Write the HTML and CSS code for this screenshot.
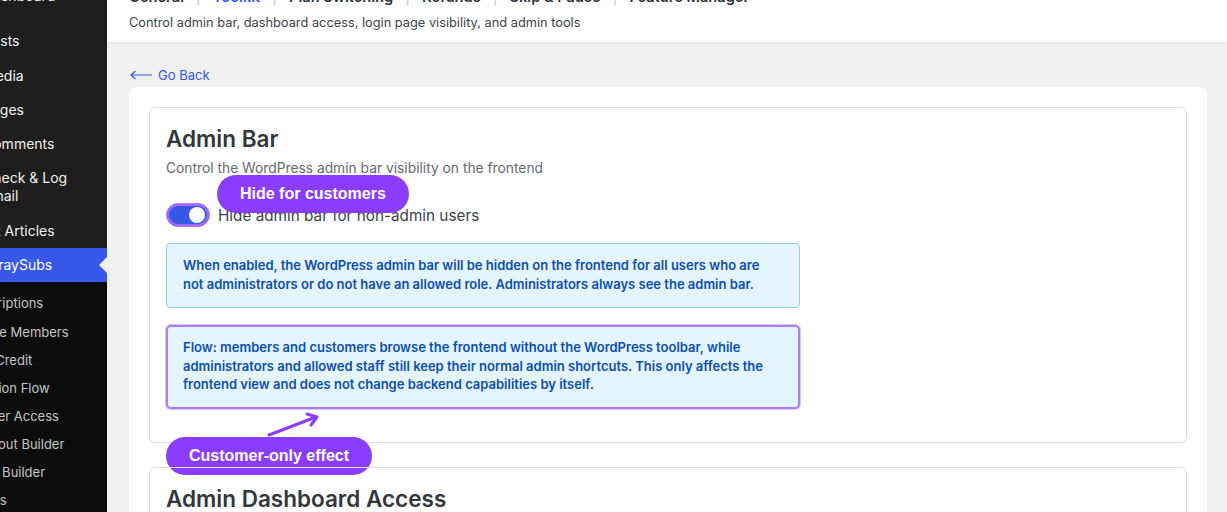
FILE: index.html
```html
<!DOCTYPE html>
<html lang="en">
<head>
    <meta charset="UTF-8">
    <meta name="viewport" content="width=device-width, initial-scale=1.0">
    <title>ArraySubs Toolkit</title>
    <link rel="stylesheet" href="styles.css">
</head>
<body>
    <div class="layout">
        <!-- Admin menu -->
        <nav class="sidebar">
            <ul class="menu">
                <li class="menu-item">Dashboard</li>
                <li class="menu-sep"></li>
                <li class="menu-item">Posts</li>
                <li class="menu-item">Media</li>
                <li class="menu-item">Pages</li>
                <li class="menu-item">Comments</li>
                <li class="menu-item">Check &amp; Log<br>Email</li>
                <li class="menu-item">Kit Articles</li>
                <li class="menu-item active">ArraySubs</li>
            </ul>
            <ul class="submenu">
                <li>Subscriptions</li>
                <li>Inactive Members</li>
                <li>Store Credit</li>
                <li>Retention Flow</li>
                <li>Member Access</li>
                <li>Checkout Builder</li>
                <li>Profile Builder</li>
                <li>Reports</li>
            </ul>
        </nav>

        <main class="main">
            <header class="page-header">
                <div class="tabs">
                    <span class="tab">General</span><span class="sep">|</span>
                    <span class="tab current">Toolkit</span><span class="sep">|</span>
                    <span class="tab">Plan Switching</span><span class="sep">|</span>
                    <span class="tab">Refunds</span><span class="sep">|</span>
                    <span class="tab">Skip &amp; Pause</span><span class="sep">|</span>
                    <span class="tab">Feature Manager</span>
                </div>
                <p class="page-desc">Control admin bar, dashboard access, login page visibility, and admin tools</p>
            </header>

            <div class="content">
                <a class="go-back" href="#">
                    <svg width="22" height="10" viewBox="0 0 22 10">
                        <path d="M1 5 H22 M5.5 1 L1 5 L5.5 9" stroke="#3858e9" stroke-width="1.2" fill="none"/>
                    </svg>
                    Go Back
                </a>

                <div class="card">
                    <section class="section">
                        <h2>Admin Bar</h2>
                        <p class="section-desc">Control the WordPress admin bar visibility on the frontend</p>

                        <label class="toggle-row">
                            <span class="toggle"><span class="knob"></span></span>
                            <span class="toggle-label">Hide admin bar for non-admin users</span>
                        </label>

                        <div class="notice">
                            When enabled, the WordPress admin bar will be hidden on the frontend for all users who are not administrators or do not have an allowed role. Administrators always see the admin bar.
                        </div>

                        <div class="notice flow">
                            Flow: members and customers browse the frontend without the WordPress toolbar, while administrators and allowed staff still keep their normal admin shortcuts. This only affects the frontend view and does not change backend capabilities by itself.
                        </div>

                        <!-- annotations -->
                        <span class="pill pill-top">Hide for customers</span>
                        <svg class="note-arrow" width="60" height="30" viewBox="0 0 60 30">
                            <path d="M5 25 L52 7" stroke="#8b3dff" stroke-width="3" stroke-linecap="round" fill="none"/>
                            <path d="M43 4 L53 7 L47 15" stroke="#8b3dff" stroke-width="3" stroke-linecap="round" stroke-linejoin="round" fill="none"/>
                        </svg>
                        <span class="pill pill-bottom">Customer-only effect</span>
                    </section>

                    <section class="section">
                        <h2>Admin Dashboard Access</h2>
                        <p class="section-desc">Restrict access to the WordPress dashboard for non-admin users</p>
                    </section>
                </div>
            </div>
        </main>
    </div>
</body>
</html>
```

FILE: styles.css
```css
* {
    box-sizing: border-box;
}
body {
    margin: 0;
    background-color: #f0f0f0;
    font-family: Inter, "Noto Sans", sans-serif;
    overflow: hidden;
}
.layout {
    display: flex;
    height: 512px;
}

/* sidebar */
.sidebar {
    width: 107px;
    flex-shrink: 0;
    background-color: #0c0c0c;
    overflow: hidden;
}
.menu, .submenu {
    list-style: none;
    margin: 0;
    padding: 0;
    width: 160px;
    margin-left: -53px;
}
.menu {
    background-color: #1e1e1e;
    margin-top: -21px;
}
.menu-item {
    position: relative;
    padding: 8px 8px 8.3px 36px;
    font-size: 14px;
    line-height: 18px;
    color: #f0f0f0;
}
.menu-sep {
    height: 11px;
}
.menu-item.active {
    background-color: #3858e9;
    color: #fff;
}
.menu-item.active::after {
    content: "";
    position: absolute;
    right: 0;
    top: 9px;
    border: 8px solid transparent;
    border-right-color: #f0f0f0;
}
.submenu {
    padding: 7px 0 8px;
}
.submenu li {
    padding: 5px 12px 5.15px;
    font-size: 13px;
    line-height: 18px;
    color: #c3c4c7;
}

/* main */
.main {
    flex: 1;
    min-width: 0;
}
.page-header {
    background-color: #fff;
    margin-top: -14px;
    padding: 0 22px 10px;
    box-shadow: 0 1px 3px rgba(0, 0, 0, 0.08);
}
.tabs {
    display: flex;
    align-items: center;
    gap: 12px;
    font-size: 14.6px;
    line-height: 22px;
    font-weight: 600;
    color: #2c3338;
}
.tab.current {
    color: #3858e9;
}
.sep {
    color: #c3c4c7;
    font-weight: 400;
}
.page-desc {
    margin: 6px 0 0;
    font-size: 12.8px;
    line-height: 18px;
    color: #3c434a;
}
.content {
    padding: 24px 20px 0 22px;
}
.go-back {
    display: flex;
    align-items: center;
    gap: 6px;
    padding-left: 1px;
    font-size: 13px;
    line-height: 18px;
    color: #3858e9;
    text-decoration: none;
    margin-bottom: 3px;
}
.card {
    background-color: #fff;
    border-radius: 8px;
    padding: 20px;
    box-shadow: 0 1px 2px rgba(0, 0, 0, 0.04);
}
.section {
    position: relative;
    border: 1px solid #dcdcde;
    border-radius: 6px;
    padding: 16px 16px 33px;
    margin-bottom: 24px;
}
.section h2 {
    margin: 0;
    font-size: 22.5px;
    line-height: 30px;
    font-weight: 600;
    color: #32373c;
}
.section-desc {
    margin: 4px 0 0;
    font-size: 13.8px;
    line-height: 20px;
    color: #646970;
}
.toggle-row {
    display: flex;
    align-items: center;
    gap: 8px;
    margin-top: 25px;
}
.toggle {
    position: relative;
    width: 44px;
    height: 24px;
    border-radius: 12px;
    background-color: #3858e9;
    box-shadow: 0 0 0 2px #a36bff inset;
    border: 1px solid #b07cff;
}
.knob {
    position: absolute;
    right: 4px;
    top: 3px;
    width: 16px;
    height: 16px;
    border-radius: 50%;
    background-color: #fff;
}
.toggle-label {
    font-size: 15.3px;
    color: #3c434a;
}
.notice {
    width: 634px;
    margin-top: 16px;
    padding: 12px 16px 14px;
    background-color: #e5f5fd;
    border: 1px solid #8ecff5;
    border-radius: 4px;
    font-size: 13px;
    line-height: 18.5px;
    font-weight: 600;
    color: #0b4fb3;
}
.notice.flow {
    margin-top: 17px;
    border: 2px solid #a97ff6;
    border-radius: 5px;
    padding: 11px 15px 13.5px;
    box-shadow: 0 0 0 1px #d8c4fc;
}

/* annotations */
.pill {
    position: absolute;
    padding: 0 23px;
    height: 38px;
    line-height: 38px;
    border-radius: 19px;
    background-color: #8b3dff;
    color: #fff;
    font-family: "Liberation Sans", Arial, sans-serif;
    font-weight: 700;
    font-size: 16px;
    white-space: nowrap;
}
.pill-top {
    left: 67px;
    top: 67px;
}
.pill-bottom {
    left: 16px;
    top: 329px;
}
.note-arrow {
    position: absolute;
    left: 114px;
    top: 302px;
}
```
